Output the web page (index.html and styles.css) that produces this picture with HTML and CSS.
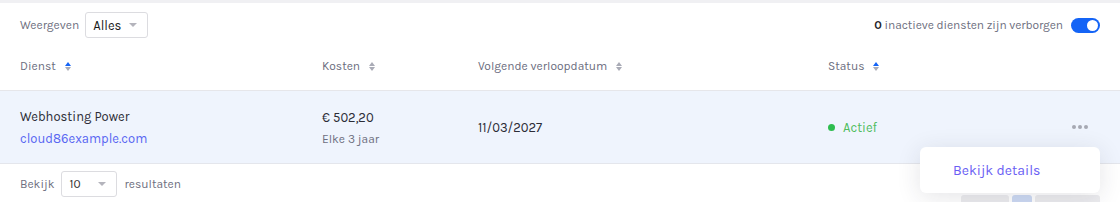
FILE: index.html
```html
<!DOCTYPE html>
<html lang="nl">
<head>
<meta charset="utf-8">
<link rel="stylesheet" href="styles.css">
</head>
<body>
<div class="topbar"></div>
<div class="panel">
  <div class="toolbar">
    <div class="filter">
      <span class="label">Weergeven</span>
      <div class="select select-lg"><span>Alles</span><i class="caret"></i></div>
    </div>
    <div class="hidden-info">
      <span class="label"><b>0</b> inactieve diensten zijn verborgen</span>
      <span class="toggle"><span class="knob"></span></span>
    </div>
  </div>
  <div class="row head">
    <div class="cell">Dienst <span class="sort up"></span></div>
    <div class="cell">Kosten <span class="sort"></span></div>
    <div class="cell">Volgende verloopdatum <span class="sort"></span></div>
    <div class="cell">Status <span class="sort up"></span></div>
    <div class="cell"></div>
  </div>
  <div class="row body">
    <div class="cell stack">
      <span class="name">Webhosting Power</span>
      <a class="link">cloud86example.com</a>
    </div>
    <div class="cell stack">
      <span class="name">€ 502,20</span>
      <span class="sub">Elke 3 jaar</span>
    </div>
    <div class="cell"><span class="name">11/03/2027</span></div>
    <div class="cell"><span class="dot"></span><span class="active">Actief</span></div>
    <div class="cell actions"><span class="more"><i></i><i></i><i></i></span></div>
  </div>
  <div class="footer">
    <div class="filter">
      <span class="label">Bekijk</span>
      <div class="select select-sm"><span>10</span><i class="caret"></i></div>
      <span class="label">resultaten</span>
    </div>
    <div class="pager">
      <span class="pg"></span><span class="pg cur"></span><span class="pg wide"></span>
    </div>
  </div>
  <div class="menu"><span>Bekijk details</span></div>
</div>
</body>
</html>
```
FILE: styles.css
```css
* { box-sizing: border-box; }
html, body { margin: 0; padding: 0; background: #fff; }
body {
  width: 1120px;
  height: 202px;
  overflow: hidden;
  font-family: "Karla", "Lato", "Noto Sans", sans-serif;
  color: #2f2f3a;
}
.topbar { height: 3px; background: #f0f0f3; }
.panel { position: relative; }
.toolbar {
  display: flex;
  justify-content: space-between;
  align-items: center;
  padding: 9px 20px 0 20px;
  height: 35px;
}
.filter { display: flex; align-items: center; gap: 7px; }
.toolbar .filter { gap: 6px; }
.label { font-size: 12px; color: #6e6f80; }
.hidden-info .label { letter-spacing: -0.1px; }
.label b { color: #1f1f2a; font-weight: 700; }
.select {
  display: flex;
  align-items: center;
  justify-content: space-between;
  height: 26px;
  border: 1px solid #dcdce0;
  border-radius: 3px;
  background: #fff;
}
.select-lg { width: 63px; padding: 0 10px 0 7px; font-size: 13px; color: #1a1a1a; }
.select-sm { width: 56px; padding: 0 10px 0 7px; font-size: 12px; color: #333; }
.caret {
  width: 0; height: 0;
  border-left: 4px solid transparent;
  border-right: 4px solid transparent;
  border-top: 4px solid #b4b4bc;
}
.hidden-info { display: flex; align-items: center; gap: 8px; }
.toggle {
  width: 29px; height: 15px;
  border-radius: 8px;
  background: #1464f6;
  display: flex;
  align-items: center;
  justify-content: flex-end;
  padding-right: 2px;
}
.knob { width: 11px; height: 11px; border-radius: 50%; background: #fff; }

.row {
  display: grid;
  grid-template-columns: 302px 156px 350px 1fr 48px;
  padding-left: 20px;
  align-items: center;
}
.head {
  height: 53px;
  padding-top: 4px;
  border-bottom: 1px solid #e6e6ea;
  font-size: 12px;
  color: #6b6d7e;
}
.cell { display: flex; align-items: center; }
.sort {
  display: inline-flex;
  flex-direction: column;
  gap: 1px;
  margin-left: 9px;
}
.sort::before, .sort::after {
  content: "";
  width: 0; height: 0;
  border-left: 3px solid transparent;
  border-right: 3px solid transparent;
}
.sort::before { border-bottom: 4px solid #a9abb6; }
.sort::after { border-top: 4px solid #a9abb6; }
.sort.up::before { border-bottom-color: #1464f6; }

.body {
  height: 73px;
  background: #eff4fd;
  border-bottom: 1px solid #e4e6ec;
  font-size: 13px;
}
.stack { flex-direction: column; align-items: flex-start; gap: 7px; padding-top: 1px; }
.name { color: #2c2c36; }
.link { color: #5866f2; text-decoration: none; }
.sub { color: #6e6f80; font-size: 12px; }
.dot { width: 7px; height: 7px; border-radius: 50%; background: #2ebd4f; margin-right: 8px; }
.active { color: #50bd5e; }
.actions { justify-content: flex-start; }
.more { display: flex; gap: 2px; }
.more i { width: 4px; height: 4px; border-radius: 50%; background: #a6a8b3; display: block; }

.footer {
  display: flex;
  justify-content: space-between;
  align-items: flex-start;
  padding: 7px 20px 0 20px;
  height: 38px;
  overflow: hidden;
}
.pager { display: flex; gap: 3px; margin-top: 24px; }
.pg { width: 48px; height: 28px; background: #ececef; border-radius: 3px; }
.pg.cur { width: 20px; background: #cddaf4; }
.pg.wide { width: 65px; }

.menu {
  position: absolute;
  left: 920px;
  top: 144px;
  width: 180px;
  height: 46px;
  background: #fff;
  border-radius: 6px;
  box-shadow: 0 4px 24px rgba(40, 40, 60, 0.12);
  display: flex;
  align-items: center;
  padding-left: 33px;
  font-size: 14px;
  color: #6a5ef4;
}
```
